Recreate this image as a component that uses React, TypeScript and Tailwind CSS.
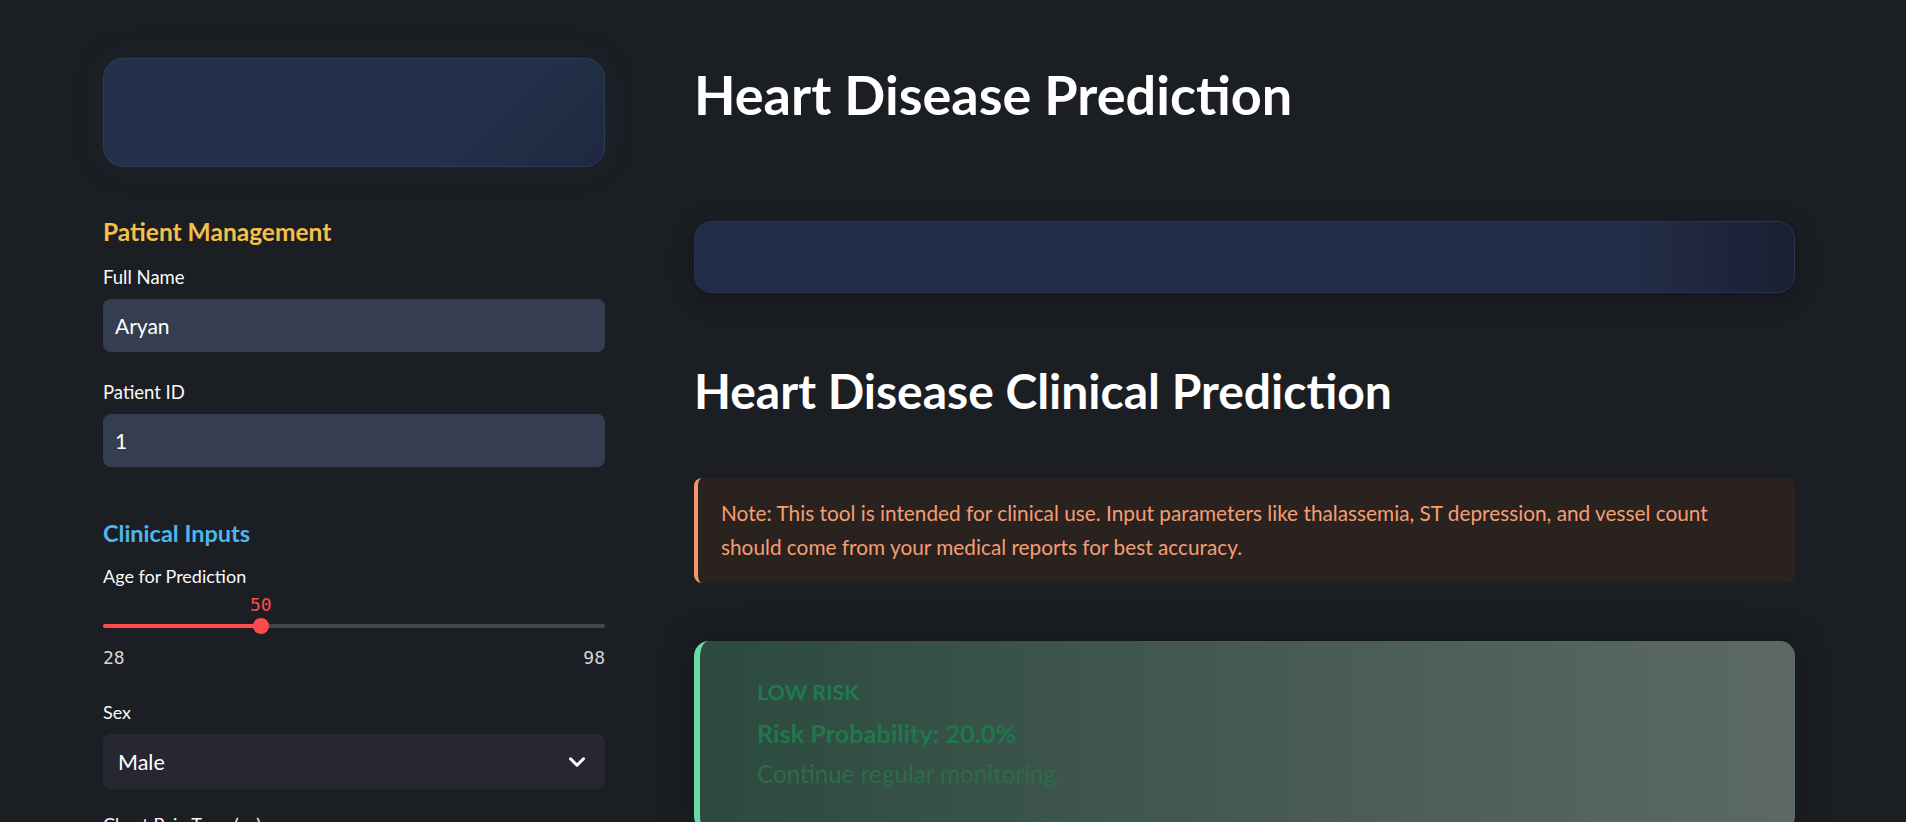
import { ChevronDown } from 'lucide-react';

const sans = { fontFamily: 'Lato, "Noto Sans", sans-serif' };

function Field({ label, value, mt }: { label: string; value: string; mt: string }) {
    return (
        <div className={mt}>
            <div className="text-[18.5px] leading-[22px] text-[#fafafa]">{label}</div>
            <div className="mt-[11px] h-[53px] rounded-lg bg-[#353d51] pl-3 flex items-center text-[21px] leading-[24px] text-white">
                {value}
            </div>
        </div>
    );
}

function AgeSlider() {
    const min = 28;
    const max = 98;
    const value = 50;
    const pct = ((value - min) / (max - min)) * 100;

    return (
        <div className="mt-[8px]">
            <div className="relative h-[20px]">
                <span
                    className="absolute top-0 -translate-x-1/2 text-[18px] leading-[20px] text-[#ff4b4b] font-['DejaVu_Sans_Mono',monospace]"
                    style={{ left: `${pct}%` }}
                >
                    {value}
                </span>
            </div>
            <div className="relative mt-[3px] h-4 flex items-center">
                <div className="h-1 w-full rounded-full bg-[#45474f]">
                    <div className="h-1 rounded-full bg-[#ff4b4b]" style={{ width: `${pct}%` }} />
                </div>
                <div
                    className="absolute top-0 h-4 w-4 -translate-x-1/2 rounded-full bg-[#ff4b4b]"
                    style={{ left: `${pct}%` }}
                />
            </div>
            <div className="mt-[14px] flex justify-between text-[18px] leading-[20px] text-[#d6d6d8] font-['DejaVu_Sans_Mono',monospace]">
                <span>{min}</span>
                <span>{max}</span>
            </div>
        </div>
    );
}

export default function App() {
    return (
        <div className="h-[822px] overflow-hidden bg-[#1b1e23] flex items-start" style={sans}>
            {/* sidebar */}
            <aside className="w-[650px] shrink-0 pl-[103px]">
                <div className="w-[502px]">
                    <div className="mt-[58px] h-[109px] rounded-[20px] border border-[#2e3d56] bg-[linear-gradient(135deg,#24314a_0%,#24314a_70%,#1f2840_100%)] shadow-[0_0_30px_rgba(45,70,110,0.18)]" />

                    <h3 className="mt-[51px] text-[24.5px] leading-[28px] font-bold text-[#f5c04a]">Patient Management</h3>
                    <Field label="Full Name" value="Aryan" mt="mt-[20px]" />
                    <Field label="Patient ID" value="1" mt="mt-[29px]" />

                    <h3 className="mt-[52px] text-[23.5px] leading-[28px] font-bold text-[#4db6ee]">Clinical Inputs</h3>
                    <div className="mt-[18px] text-[18px] leading-[22px] text-[#fafafa]">Age for Prediction</div>
                    <AgeSlider />

                    <div className="mt-[33px] text-[18px] leading-[22px] text-[#fafafa]">Sex</div>
                    <div className="mt-[11px] h-[55px] rounded-lg bg-[#262730] pl-[15px] pr-[15px] flex items-center justify-between text-[21.5px] leading-[24px] text-white">
                        <span>Male</span>
                        <ChevronDown size={26} strokeWidth={2.8} className="text-white" />
                    </div>

                    <div className="mt-[24px] text-[18px] leading-[22px] text-[#fafafa]">Chest Pain Type (cp)</div>
                </div>
            </aside>

            {/* main */}
            <main className="ml-[44px] w-[1101px] shrink-0">
                <h1 className="mt-[63px] text-[54px] leading-[64px] font-bold text-white">Heart Disease Prediction</h1>

                <div className="mt-[94px] h-[72px] rounded-[18px] border border-[#2a3550] bg-[linear-gradient(90deg,#232c46_0%,#232c46_86%,#1a1f33_100%)] shadow-[0_6px_24px_rgba(0,0,0,0.3)]" />

                <h2 className="mt-[69px] text-[48px] leading-[58px] font-bold text-white">Heart Disease Clinical Prediction</h2>

                <div className="mt-[58px] h-[105px] rounded-lg border-l-4 border-[#f6956a] bg-[#29221f] py-[18px] pl-[23px] text-[20.8px] leading-[34px] text-[#f59e72]">
                    Note: This tool is intended for clinical use. Input parameters like thalassemia, ST depression, and vessel count
                    <br />
                    should come from your medical reports for best accuracy.
                </div>

                <div className="mt-[58px] h-[190px] rounded-[15px] border-l-[6px] border-[#66dca3] bg-[linear-gradient(90deg,#2c4a3f_0%,#455a52_50%,#5c6964_100%)] pt-[30px] pl-[57px] shadow-[0_0_32px_rgba(0,0,0,0.35)]">
                    <div className="text-[21.5px] leading-[42px] font-bold text-[#1f7a50]">LOW RISK</div>
                    <div className="text-[25.3px] leading-[40px] font-bold text-[#1e784d]">Risk Probability: 20.0%</div>
                    <div className="text-[24.2px] leading-[42px] text-[#2b6c4c]">Continue regular monitoring.</div>
                </div>
            </main>
        </div>
    );
}
